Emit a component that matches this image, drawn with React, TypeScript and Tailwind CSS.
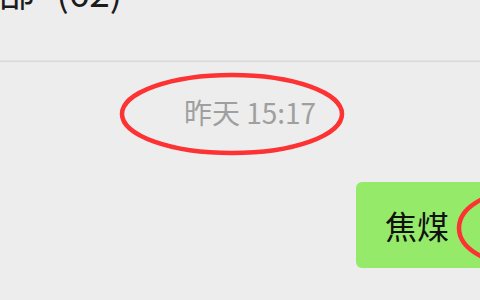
import React from 'react';

const cjk = { fontFamily: '"Noto Sans CJK SC", "Noto Sans", sans-serif' };

/** Red hand-drawn style marker that sits over the chat */
function Ring({ className, viewBox, children }: { className: string; viewBox: string; children: React.ReactNode }) {
  return (
    <svg className={`absolute pointer-events-none ${className}`} viewBox={viewBox} fill="none">
      {children}
    </svg>
  );
}

export default function App() {
  return (
    <div className="relative w-[480px] h-[300px] overflow-hidden bg-[#ededed]" style={cjk}>
      {/* chat title, mostly scrolled out of view */}
      <div className="h-[60px] overflow-hidden">
        <div className="-ml-[2px] -mt-[27px] text-[37px] leading-[37px] text-[#1b1b1b] whitespace-nowrap [word-spacing:13px]">
          部 (62)
        </div>
      </div>
      <div className="h-[2px] bg-[#d8d8d8] border-t border-[#e3e3e3]" />

      <div className="pl-[20px] pt-[36px] flex justify-center">
        <span className="text-[28px] leading-[28px] text-[#9f9f9f]">昨天 15:17</span>
      </div>

      <div className="flex pl-[356px] pt-[56px]">
        <div className="shrink-0 w-[200px] h-[86px] rounded-[6px] bg-[#95ea69] pl-[29px] flex items-center">
          <span className="text-[32px] leading-[32px] text-[#111]">焦煤</span>
        </div>
      </div>

      <Ring className="left-[118px] top-[71px] w-[230px] h-[88px]" viewBox="0 0 230 88">
        <ellipse cx="114" cy="43" rx="110" ry="39" stroke="#fd3232" strokeWidth="4.5" />
      </Ring>
      <Ring className="left-[452px] top-[186px] w-[130px] h-[84px]" viewBox="0 0 130 84">
        <ellipse cx="65" cy="42" rx="58" ry="36" stroke="#fd3232" strokeWidth="4.5" />
      </Ring>
    </div>
  );
}
